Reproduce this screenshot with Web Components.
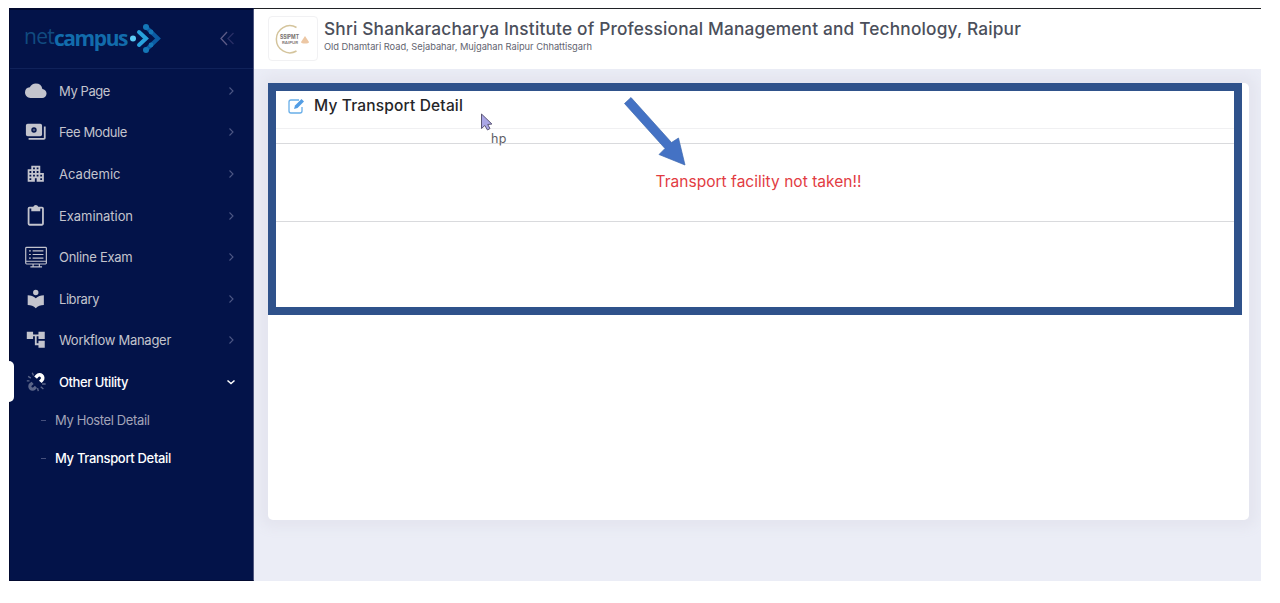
<!DOCTYPE html>
<html lang="en">
<head>
<meta charset="utf-8">
<title>netcampus</title>
<style>
html,body{margin:0;height:603px;overflow:hidden;background:#fff}
body{font-family:Inter,"Open Sans",sans-serif}
</style>
</head>
<body>
<nc-app>
  <nc-sidebar slot="side">
    <nc-item icon="cloud" w="51">My Page</nc-item>
    <nc-item icon="fee" w="68">Fee Module</nc-item>
    <nc-item icon="academic" w="61.5">Academic</nc-item>
    <nc-item icon="clip" w="74">Examination</nc-item>
    <nc-item icon="online" w="73.5">Online Exam</nc-item>
    <nc-item icon="library" w="40">Library</nc-item>
    <nc-item icon="flow" w="112">Workflow Manager</nc-item>
    <nc-item icon="utility" w="69" active>Other Utility</nc-item>
    <nc-subitem w="94.5">My Hostel Detail</nc-subitem>
    <nc-subitem w="116" active>My Transport Detail</nc-subitem>
  </nc-sidebar>
  <nc-header></nc-header>
  <nc-card></nc-card>
</nc-app>
<script>
const define = (name, html, setup) => {
  customElements.define(name, class extends HTMLElement {
    connectedCallback() {
      if (this.shadowRoot) return;
      const t = document.createElement('template');
      t.innerHTML = html;
      this.attachShadow({mode: 'open'}).append(t.content.cloneNode(true));
      if (setup) setup.call(this, this.shadowRoot);
    }
  });
};

// A single line of text tracked out or in to a given width.
define('nc-text', `<style>
:host{display:inline-block;white-space:nowrap;line-height:1.3}
span{display:inline-block}
</style><span><slot></slot></span>`, function (root) {
  const span = root.querySelector('span');
  const width = parseFloat(this.getAttribute('w'));
  const count = this.textContent.length;
  span.style.letterSpacing = (width - span.getBoundingClientRect().width) / count + 'px';
});

const icons = {
  cloud: '<path d="M19.35 10.04A7.49 7.49 0 0 0 12 4C9.11 4 6.6 5.64 5.35 8.04A5.994 5.994 0 0 0 0 14c0 3.31 2.69 6 6 6h13c2.76 0 5-2.24 5-5 0-2.64-2.05-4.78-4.65-4.96z"/>',
  fee: '<path fill-rule="evenodd" d="M3 3h14a2 2 0 0 1 2 2v10a2 2 0 0 1-2 2H3a2 2 0 0 1-2-2V5a2 2 0 0 1 2-2zm7 4a3 3 0 1 0 0 6 3 3 0 0 0 0-6z"/><circle cx="10" cy="10" r="1.5" opacity=".4"/><path d="M21 6h2v13a2 2 0 0 1-2 2H4v-2h17z"/>',
  academic: '<path fill-rule="evenodd" d="M17 11V3H7v4H3v14h8v-4h2v4h8V11h-4zM7 19H5v-2h2v2zm0-4H5v-2h2v2zm0-4H5V9h2v2zm4 4H9v-2h2v2zm0-4H9V9h2v2zm0-4H9V5h2v2zm4 8h-2v-2h2v2zm0-4h-2V9h2v2zm0-4h-2V5h2v2zm4 12h-2v-2h2v2zm0-4h-2v-2h2v2z"/>',
  clip: '<path d="M19 2h-4.200a3 3 0 0 0-5.600 0H5a2 2 0 0 0-2 2v17a2 2 0 0 0 2 2h14a2 2 0 0 0 2-2V4a2 2 0 0 0-2-2zm0 19H5V4h2v3h10V4h2z"/>',
  online: '<g fill="none" stroke="currentColor" stroke-width="1.3"><rect x=".8" y="1.500" width="23" height="18.500" rx="1"/><path d="M1 17h22.500M9 20v3m7-3v3M6 23.200h13M4.500 5.500h2m2 0h12M4.500 9.500h2m2 0h12M4.500 13.500h2m2 0h12"/></g>',
  library: '<path d="M12 11.550C9.640 9.350 6.480 8 3 8v11c3.480 0 6.640 1.350 9 3.550 2.360-2.190 5.520-3.550 9-3.550V8c-3.480 0-6.640 1.350-9 3.550zM12 8a3 3 0 1 0 0-6 3 3 0 0 0 0 6z"/>',
  flow: '<path d="M22 11V3h-7v3H9V3H2v8h7V8h2v10h4v3h7v-8h-7v3h-2V8h2v3z"/>',
  utility: '<g fill="none" stroke="currentColor"><path d="m11.800 7.400 1.700-2a3.500 3.500 0 0 1 5.300 4.800l-1.700 1.900" stroke-width="4"/><g opacity=".35"><path d="M8.500 13.200 6.300 15a3 3 0 0 0 4.200 4.300l1.700-1.600" stroke-width="3.500"/><path stroke-width="1.500" d="m8 2 1.500 3M3.500 6l3 2M2 11h3m9 8 .8 3.500m2.700-5 3 2.500m-1.500-5.500h4"/></g></g>'
};

define('nc-app', `<style>
:host{display:grid;box-sizing:border-box;width:1280px;height:603px;padding:8px 19px 22px 9px;grid-template-columns:245px 1fr}
.main{display:flex;flex-direction:column;background:#ebedf6;min-width:0}
</style><slot name="side"></slot><div class="main"><slot></slot></div>`);

define('nc-sidebar', `<style>
:host{display:flex;flex-direction:column;box-sizing:border-box;background:#031349;border:solid #020a30;border-width:2px 2px 1px 1px;border-right:1px solid #50587f}
.brand{height:58px;display:flex;align-items:center;padding:0 18px 0 14px;justify-content:space-between;border-bottom:1px solid #10225a}
.logo{display:flex;align-items:center;font:400 21px "Open Sans",sans-serif;color:#114b80}
b{color:#126cac}
.logo{padding-bottom:2px}
.logo nc-text{margin-top:-3px}
.logo svg{margin-left:2px}
.menu{padding-top:1px}
</style><div class="brand"><div class="logo"><nc-text w="30">net</nc-text><b><nc-text w="73">campus</nc-text></b><svg width="32" height="31" viewBox="0 0 32 31" fill="none"><g stroke-linecap="round"><path d="m17 4 12 11.500L17 27" stroke="#0c5ca3" stroke-width="4"/><path d="m10 9 7 6.500-7 6.500" stroke="#28a1dc" stroke-width="4"/></g><g fill="#1477b7"><circle cx="17" cy="4" r="3"/><circle cx="17" cy="27" r="3"/><circle cx="22" cy="9" r="2.400"/><circle cx="22" cy="22" r="2.400"/></g><circle cx="4" cy="15.500" r="3" fill="#5bcbf5"/></svg></div>
<svg width="16" height="15" viewBox="0 0 16 15" fill="none" stroke-width="1.300" style="margin-bottom:2px"><path d="m8 1-6 6.500L8 14" stroke="#5d5b87"/><path d="M14.500 2 9 7.500l5.500 5.500" stroke="#292f66"/></svg></div>
<div class="menu"><slot></slot></div>`);

define('nc-item', `<style>
:host{display:flex;align-items:center;box-sizing:border-box;height:41.600px;padding:0 16px 0 14px;color:#c3c4cd;font-size:13px;position:relative}
:host([active]){color:#fff;font-weight:500}
:host([active])::before{content:"";position:absolute;left:-1px;top:0;width:5px;height:41px;background:#fff;border-radius:0 5px 5px 0}
.icon{width:24px;height:22px;margin-right:11px;display:flex;justify-content:center}
nc-text{flex:1;padding-top:1px}
</style><div class="icon"></div><svg class="arrow" width="12" height="12" viewBox="0 0 12 12" fill="none"></svg>`, function (root) {
  const name = this.getAttribute('icon');
  root.querySelector('.icon').innerHTML = `<svg width="22" height="22" viewBox="0 0 24.500 24.500" fill="currentColor">${icons[name]}</svg>`;
  const arrow = root.querySelector('.arrow');
  const text = document.createElement('nc-text');
  text.setAttribute('w', this.getAttribute('w'));
  text.textContent = this.textContent;
  arrow.before(text);
  arrow.innerHTML = this.hasAttribute('active')
    ? '<path d="m2.500 4.500 3.500 3 3.500-3" stroke="#fff" stroke-width="1.500"/>'
    : '<path d="m4.500 2.500 3.500 3.500-3.500 3.500" stroke="#4d5784" stroke-width="1.100"/>';
});

define('nc-subitem', `<style>
:host{display:flex;align-items:center;height:38px;padding-left:31px;color:#a2a4b8;font-size:13px;margin-top:-1px;margin-bottom:1px}
:host([active]){color:#fff;font-weight:500}
i{width:5px;height:1px;background:#46507c;margin-right:9px}
</style><i></i>`, function (root) {
  const text = document.createElement('nc-text');
  text.setAttribute('w', this.getAttribute('w'));
  text.textContent = this.textContent;
  root.append(text);
});

define('nc-header', `<style>
:host{display:flex;box-sizing:border-box;height:61px;background:#fff;border-top:1px solid #202226;padding:7px 0 0 14px}
.crest{box-sizing:border-box;width:50px;height:45px;border:1px solid #f1f1f3;border-radius:4px;display:flex;align-items:center;justify-content:center}
.names{display:flex;flex-direction:column;padding:2px 0 0 6px}
.title{font-size:17.300px;font-weight:500;color:#4b4f5b;line-height:1.3}
.addr{font-size:9.300px;color:#62646f;margin-top:1px}
</style><div class="crest"><svg width="36" height="32" viewBox="0 0 36 32"><path d="M24 4.500A13.500 13.500 0 1 0 24 28" fill="none" stroke="#d4c49c" stroke-width="1.500" transform="translate(-2.500 0)"/><path d="m30 13 4 6c0 2-8 2-8 0z" fill="#ecc7a4"/><text x="5" y="16" font-family="Inter" font-weight="700" font-size="5.500" textLength="19" lengthAdjust="spacingAndGlyphs" fill="#77716e">SSIPMT</text><text x="7" y="21" font-family="Inter" font-weight="600" font-size="3.800" textLength="16" lengthAdjust="spacingAndGlyphs" fill="#77716e">RAIPUR</text></svg></div>
<div class="names"><nc-text class="title" w="697">Shri Shankaracharya Institute of Professional Management and Technology, Raipur</nc-text><nc-text class="addr" w="268">Old Dhamtari Road, Sejabahar, Mujgahan Raipur Chhattisgarh</nc-text></div>`);

define('nc-card', `<style>
:host{display:block;box-sizing:border-box;width:981px;height:437px;margin:14px 0 0 14px;background:#fff;border-radius:5px;box-shadow:0 0 12px 8px #e4e5ef;clip-path:inset(-14px -12px -40px -14px);position:relative}
.frame{box-sizing:border-box;width:974px;height:232px;border:8px solid #2f528b;display:flex;flex-direction:column}
.head{height:38px;box-sizing:border-box;padding:4.500px 0 0 12px;display:flex;align-items:flex-start;gap:9px;border-bottom:1px solid #f0f0f2}
.head svg{margin-top:2px}
.head nc-text{font-size:15.500px;font-weight:500;color:#252629}
.gap{height:14px;border-bottom:1px solid #d9dadd}
.body{height:77px;border-bottom:1px solid #d9dadd;display:flex;justify-content:center;align-items:center;padding-left:7px}
.body nc-text{font-size:15.500px;color:#e23b42}
.arrow{position:absolute;left:354px;top:11px}
.cursor{position:absolute;left:212px;top:30px}
.tip{position:absolute;left:223px;top:48px;font-size:12.500px;color:#606065}
</style><div class="frame"><div class="head"><svg width="17" height="16" viewBox="0 0 17 16" fill="none" stroke="#68aee8"><path d="M11 2H3a2 2 0 0 0-2 2v9a2 2 0 0 0 2 2h9a2 2 0 0 0 2-2V9" stroke-width="1.300"/><path d="m7 7.500 6.500-6.500L16 3.500 9.500 10l-3.500 1z" fill="#529de4" stroke="none"/></svg><nc-text w="149">My Transport Detail</nc-text></div><div class="gap"></div><div class="body"><nc-text w="206">Transport facility not taken!!</nc-text></div></div>
<svg class="arrow" width="66" height="74" viewBox="0 0 66 74"><path d="M9 3.500 2.500 9.500 37 60.500z" fill="none"/><path d="M9 3.500 2.500 9.500 43 54.500 37 60.500 63 71 56.500 44 49.500 48z" fill="none"/><path d="M9 3.500 2.500 9.500 43 54.500l-6 6L63 71l-6.500-27-7 4.500z" fill="#4472c4" stroke="#3e68af" stroke-width=".7"/></svg>
<svg class="cursor" width="14" height="19" viewBox="0 0 14 19"><path d="M1.500 1v14.500l3.300-3 2.700 4.500 2.500-1.500-2.300-4 4.200-.5z" fill="#aaa6e6" stroke="#5c5777" stroke-width="1"/></svg>
<nc-text class="tip" w="16">hp</nc-text>`);
</script>
</body>
</html>
